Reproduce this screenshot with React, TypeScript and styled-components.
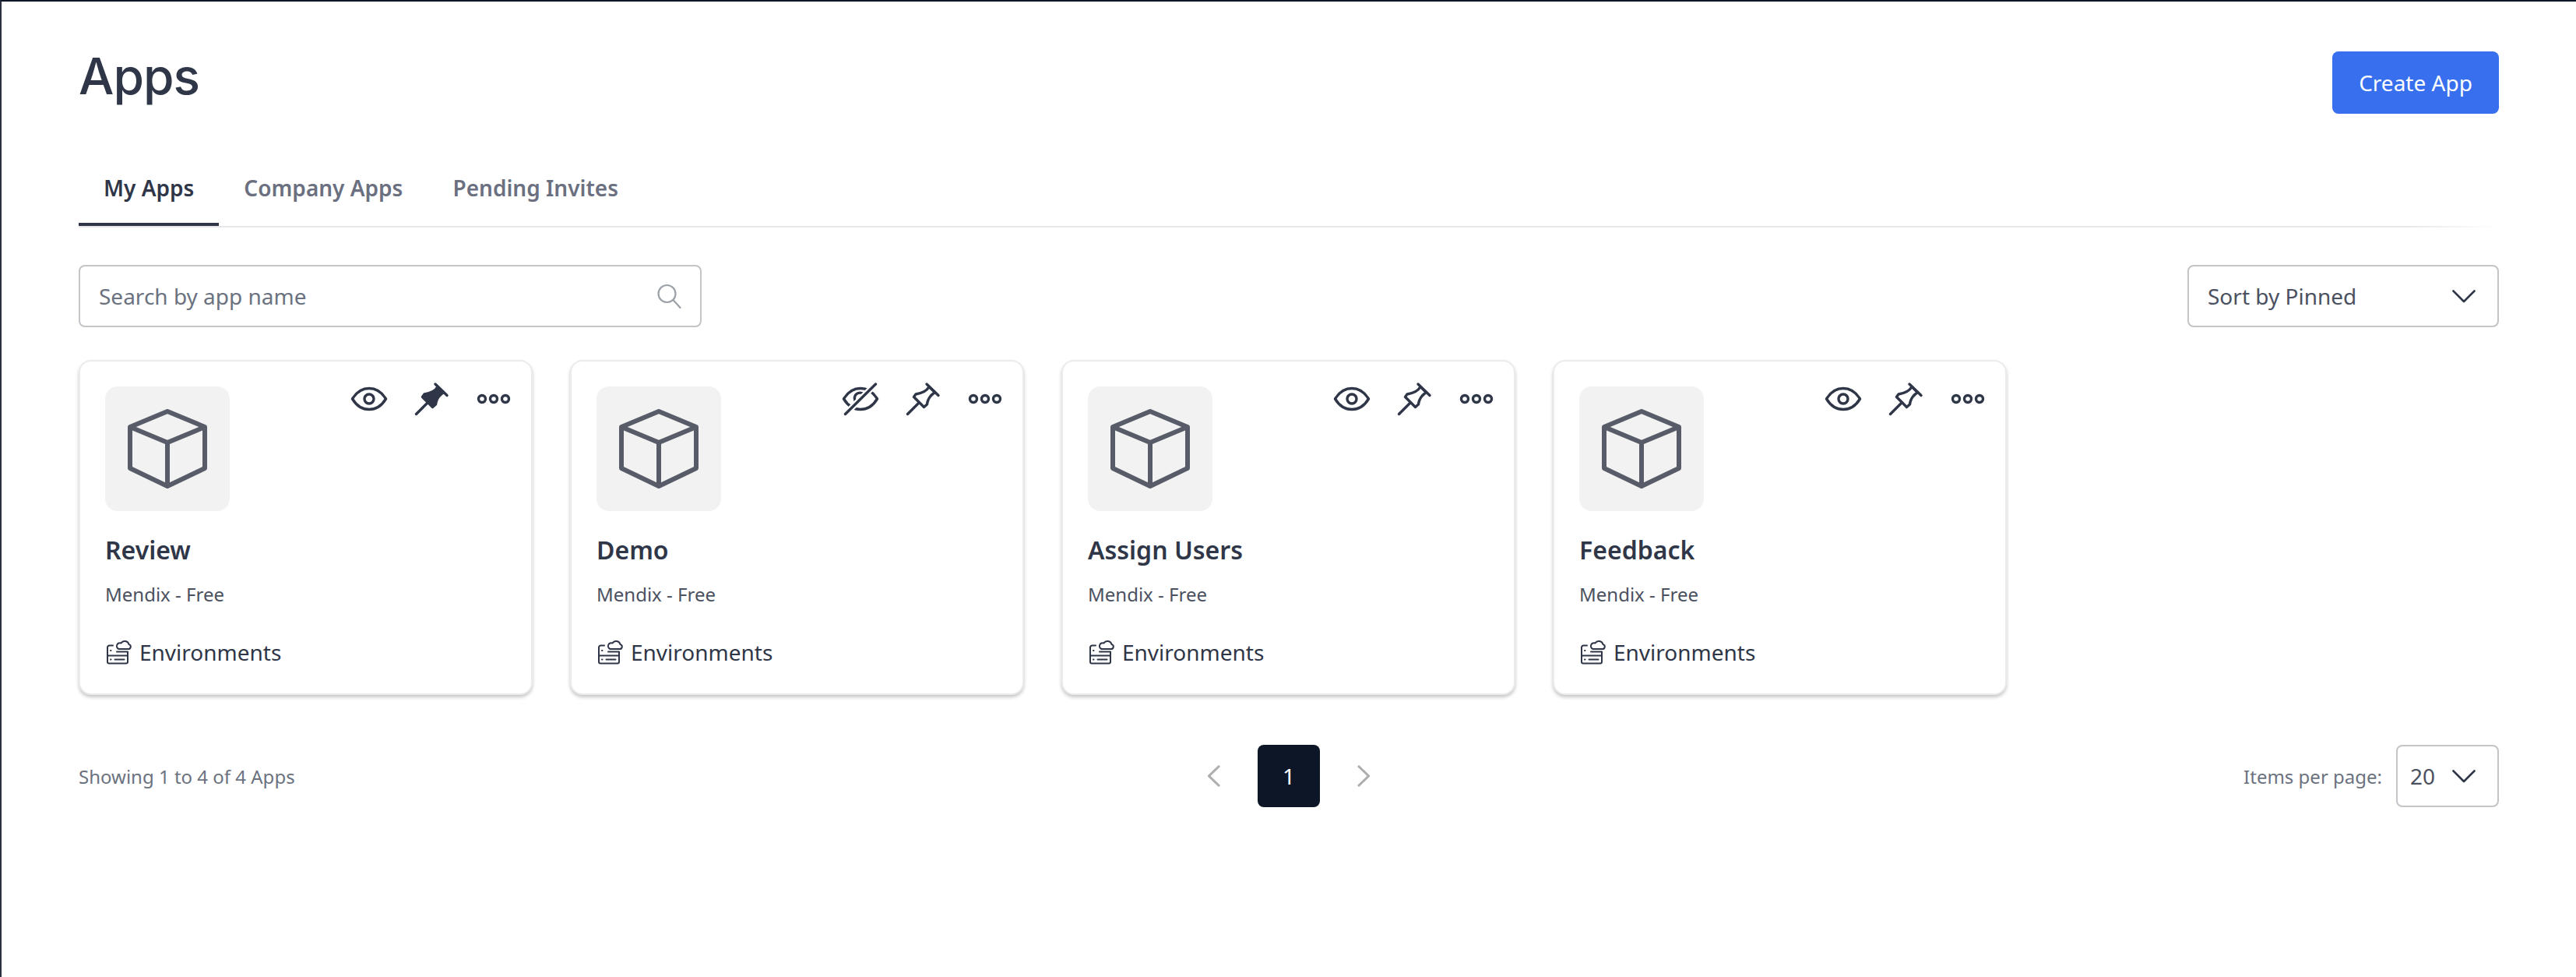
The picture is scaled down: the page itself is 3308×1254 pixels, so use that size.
import styled, { createGlobalStyle } from 'styled-components'

const GlobalStyle = createGlobalStyle`
    * {
        box-sizing: border-box;
    }
    html, body {
        margin: 0;
        background: #fff;
    }
`

const Page = styled.div`
    height: 1254px;
    padding: 64px 99px 0 99px;
    border-top: 2px solid #0d1626;
    border-left: 2px solid #2b3040;
    font-family: "Noto Sans", "Open Sans", sans-serif;
    color: #2f3647;
`

const Header = styled.header`
    display: flex;
    justify-content: space-between;
    align-items: flex-start;
`

const Title = styled.h1`
    margin: 0;
    font-family: Inter, "Noto Sans", sans-serif;
    font-size: 64px;
    font-weight: 500;
    line-height: 64px;
    letter-spacing: -1px;
    color: #2f3647;
`

const CreateButton = styled.button`
    width: 214px;
    height: 80px;
    border: 0;
    border-radius: 8px;
    background: #376fee;
    color: #fff;
    font-family: inherit;
    font-size: 28px;
`

const Tabs = styled.nav`
    display: flex;
    margin-top: 59px;
    padding-bottom: 2px;
    background: linear-gradient(to right, #e7e7e9 96%, #fff) bottom / 100% 2px no-repeat;
`

const Tab = styled.div<{ $active?: boolean }>`
    padding: 16px 32px 25px;
    border-bottom: 4px solid ${p => (p.$active ? '#2f3647' : 'transparent')};
    font-size: 28px;
    font-weight: 600;
    line-height: 40px;
    color: ${p => (p.$active ? '#2f3647' : '#6b7080')};
`

const Toolbar = styled.div`
    display: flex;
    justify-content: space-between;
    margin-top: 48px;
`

const SearchBox = styled.label`
    display: flex;
    align-items: center;
    width: 800px;
    height: 80px;
    padding: 0 24px;
    border: 2px solid #c4c4c9;
    border-radius: 8px;
`

const SearchInput = styled.input`
    flex: 1;
    min-width: 0;
    border: 0;
    outline: 0;
    padding: 0;
    font-family: inherit;
    font-size: 28px;
    color: #2f3647;
    &::placeholder {
        color: #6b7280;
        opacity: 1;
    }
`

const Select = styled.div<{ $width: number; $inset: number }>`
    display: flex;
    align-items: center;
    justify-content: space-between;
    width: ${p => p.$width}px;
    height: 80px;
    padding: 0 28px 0 ${p => p.$inset}px;
    border: 2px solid #c4c4c9;
    border-radius: 8px;
    font-size: 28px;
    color: #4b5160;
`

const CardRow = styled.div`
    display: flex;
    gap: 48px;
    margin-top: 42px;
`

const Card = styled.article`
    width: 583px;
    height: 430px;
    padding: 32px;
    border: 2px solid #ebebeb;
    border-radius: 16px;
    background: #fff;
    box-shadow: 0 3px 4px rgba(0, 0, 0, 0.22);
`

const CardTop = styled.div`
    display: flex;
    justify-content: space-between;
    align-items: flex-start;
`

const AppTile = styled.div`
    display: flex;
    align-items: center;
    justify-content: center;
    width: 160px;
    height: 160px;
    border-radius: 16px;
    background: #f2f2f2;
`

const Actions = styled.div`
    display: flex;
    gap: 32px;
    margin: -8px -8px 0 0;
    color: #2f3647;
`

const AppName = styled.h3`
    margin: 28px 0 0;
    font-size: 32px;
    font-weight: 600;
    line-height: 44px;
    color: #2f3647;
`

const AppPlan = styled.div`
    margin-top: 19px;
    font-size: 24px;
    line-height: 32px;
    color: #4b5160;
`

const EnvLink = styled.div`
    display: flex;
    align-items: center;
    gap: 10px;
    margin-top: 42px;
    padding-left: 2px;
    font-size: 28px;
    line-height: 32px;
    color: #2f3647;
`

const Footer = styled.footer`
    display: grid;
    grid-template-columns: 1fr auto 1fr;
    align-items: center;
    margin-top: 64px;
`

const Showing = styled.div`
    font-size: 24px;
    color: #6b7280;
`

const Pager = styled.div`
    display: flex;
    align-items: center;
    gap: 48px;
    color: #aeaeae;
`

const PageButton = styled.div`
    display: flex;
    align-items: center;
    justify-content: center;
    width: 80px;
    height: 80px;
    border-radius: 8px;
    background: #0d1626;
    color: #fff;
    font-size: 28px;
`

const PerPage = styled.div`
    display: flex;
    justify-content: flex-end;
    align-items: center;
    gap: 18px;
    font-size: 24px;
    color: #6b7280;
`

const CubeIcon = () => (
    <svg width="104" height="102" viewBox="0 0 104 102" fill="none" stroke="#585c68" strokeWidth="6" strokeLinejoin="round">
        <path d="M52 3 L100 23 V76 L52 99 L4 76 V23 Z" />
        <path d="M4 23 L52 43 L100 23 M52 43 V99" />
    </svg>
)

const EyeIcon = ({ off }: { off?: boolean }) => (
    <svg width="48" height="48" viewBox="0 0 48 48" fill="none" stroke="currentColor" strokeWidth="3.4" strokeLinecap="round" strokeLinejoin="round">
        <path d="M2.5 24 C8 15 15 10.5 24 10.5 S40 15 45.5 24 C40 33 33 37.5 24 37.5 S8 33 2.5 24 Z" />
        {off ? (
            <>
                <path d="M18.5 28 A6.5 6.5 0 0 1 28 18" />
                <path d="M4.5 43.5 L43.5 5" stroke="#fff" strokeWidth="8" />
                <path d="M4.5 43.5 L43.5 5" />
            </>
        ) : (
            <circle cx="24" cy="24" r="6" />
        )}
    </svg>
)

const PinIcon = ({ filled }: { filled?: boolean }) => (
    <svg width="48" height="48" viewBox="0 0 48 48" fill={filled ? 'currentColor' : 'none'} stroke="currentColor" strokeWidth="3.4" strokeLinecap="round" strokeLinejoin="round">
        <path d="M4.5 43.5 L19 29" />
        <path d="M29 5 L44 19.5" />
        <path d="M32 8.5 C29 14 24 16.5 15 18 L12.5 21.5 L25.5 34.5 L29.5 31 C30 26 33 20 39.5 15.5 Z" />
    </svg>
)

const DotsIcon = () => (
    <svg width="48" height="48" viewBox="0 0 48 48" fill="none" stroke="currentColor" strokeWidth="3.4">
        <circle cx="9" cy="24" r="4.5" />
        <circle cx="24" cy="24" r="4.5" />
        <circle cx="39" cy="24" r="4.5" />
    </svg>
)

const EnvIcon = () => (
    <svg width="32" height="32" viewBox="0 0 32 32" fill="none" stroke="currentColor" strokeWidth="2" strokeLinecap="round" strokeLinejoin="round">
        <path d="M1 10 V28.5 a2 2 0 0 0 2 2 H25 a2 2 0 0 0 2 -2 V15.5 H13" />
        <path d="M1 10 a2.5 2.5 0 0 1 2.5 -2.5 H8" />
        <path d="M1 20.5 H27 M10.5 25.5 H22.5 M5 25.5 H5.5 M5 14 H5.5" />
        <path d="M15.5 12 H27.5 a3 3 0 0 0 1 -5.9 A5.5 5.5 0 0 0 18.5 4.5 a3.8 3.8 0 0 0 -3 7.5 Z" fill="#fff" />
    </svg>
)

const SearchIcon = () => (
    <svg width="31" height="32" viewBox="0 0 31 32" fill="none" stroke="#9ca0a8" strokeWidth="2.2" strokeLinecap="round">
        <circle cx="12.5" cy="13" r="11" />
        <path d="M20.5 21 L29.5 31" />
    </svg>
)

const ChevronDown = () => (
    <svg width="30" height="17" viewBox="0 0 30 17" fill="none" stroke="#2f3647" strokeWidth="2.6" strokeLinecap="round" strokeLinejoin="round">
        <path d="M1.5 1.5 L15 15 L28.5 1.5" />
    </svg>
)

const ChevronSide = ({ right }: { right?: boolean }) => (
    <svg width="16" height="28" viewBox="0 0 16 28" fill="none" stroke="currentColor" strokeWidth="3">
        <path d={right ? 'M1 1 L14.5 14 L1 27' : 'M15 1 L1.5 14 L15 27'} />
    </svg>
)

const apps = [
    { name: 'Review', pinned: true },
    { name: 'Demo', hidden: true },
    { name: 'Assign Users' },
    { name: 'Feedback' },
]

export default function App() {
    return (
        <>
            <GlobalStyle />
            <Page>
                <Header>
                    <Title>Apps</Title>
                    <CreateButton>Create App</CreateButton>
                </Header>
                <Tabs>
                    <Tab $active>My Apps</Tab>
                    <Tab>Company Apps</Tab>
                    <Tab>Pending Invites</Tab>
                </Tabs>
                <Toolbar>
                    <SearchBox>
                        <SearchInput placeholder="Search by app name" />
                        <SearchIcon />
                    </SearchBox>
                    <Select $width={400} $inset={24}>
                        Sort by Pinned
                        <ChevronDown />
                    </Select>
                </Toolbar>
                <CardRow>
                    {apps.map(app => (
                        <Card key={app.name}>
                            <CardTop>
                                <AppTile>
                                    <CubeIcon />
                                </AppTile>
                                <Actions>
                                    <EyeIcon off={app.hidden} />
                                    <PinIcon filled={app.pinned} />
                                    <DotsIcon />
                                </Actions>
                            </CardTop>
                            <AppName>{app.name}</AppName>
                            <AppPlan>Mendix - Free</AppPlan>
                            <EnvLink>
                                <EnvIcon />
                                Environments
                            </EnvLink>
                        </Card>
                    ))}
                </CardRow>
                <Footer>
                    <Showing>Showing 1 to 4 of 4 Apps</Showing>
                    <Pager>
                        <ChevronSide />
                        <PageButton>1</PageButton>
                        <ChevronSide right />
                    </Pager>
                    <PerPage>
                        Items per page:
                        <Select $width={132} $inset={16}>
                            20
                            <ChevronDown />
                        </Select>
                    </PerPage>
                </Footer>
            </Page>
        </>
    )
}
